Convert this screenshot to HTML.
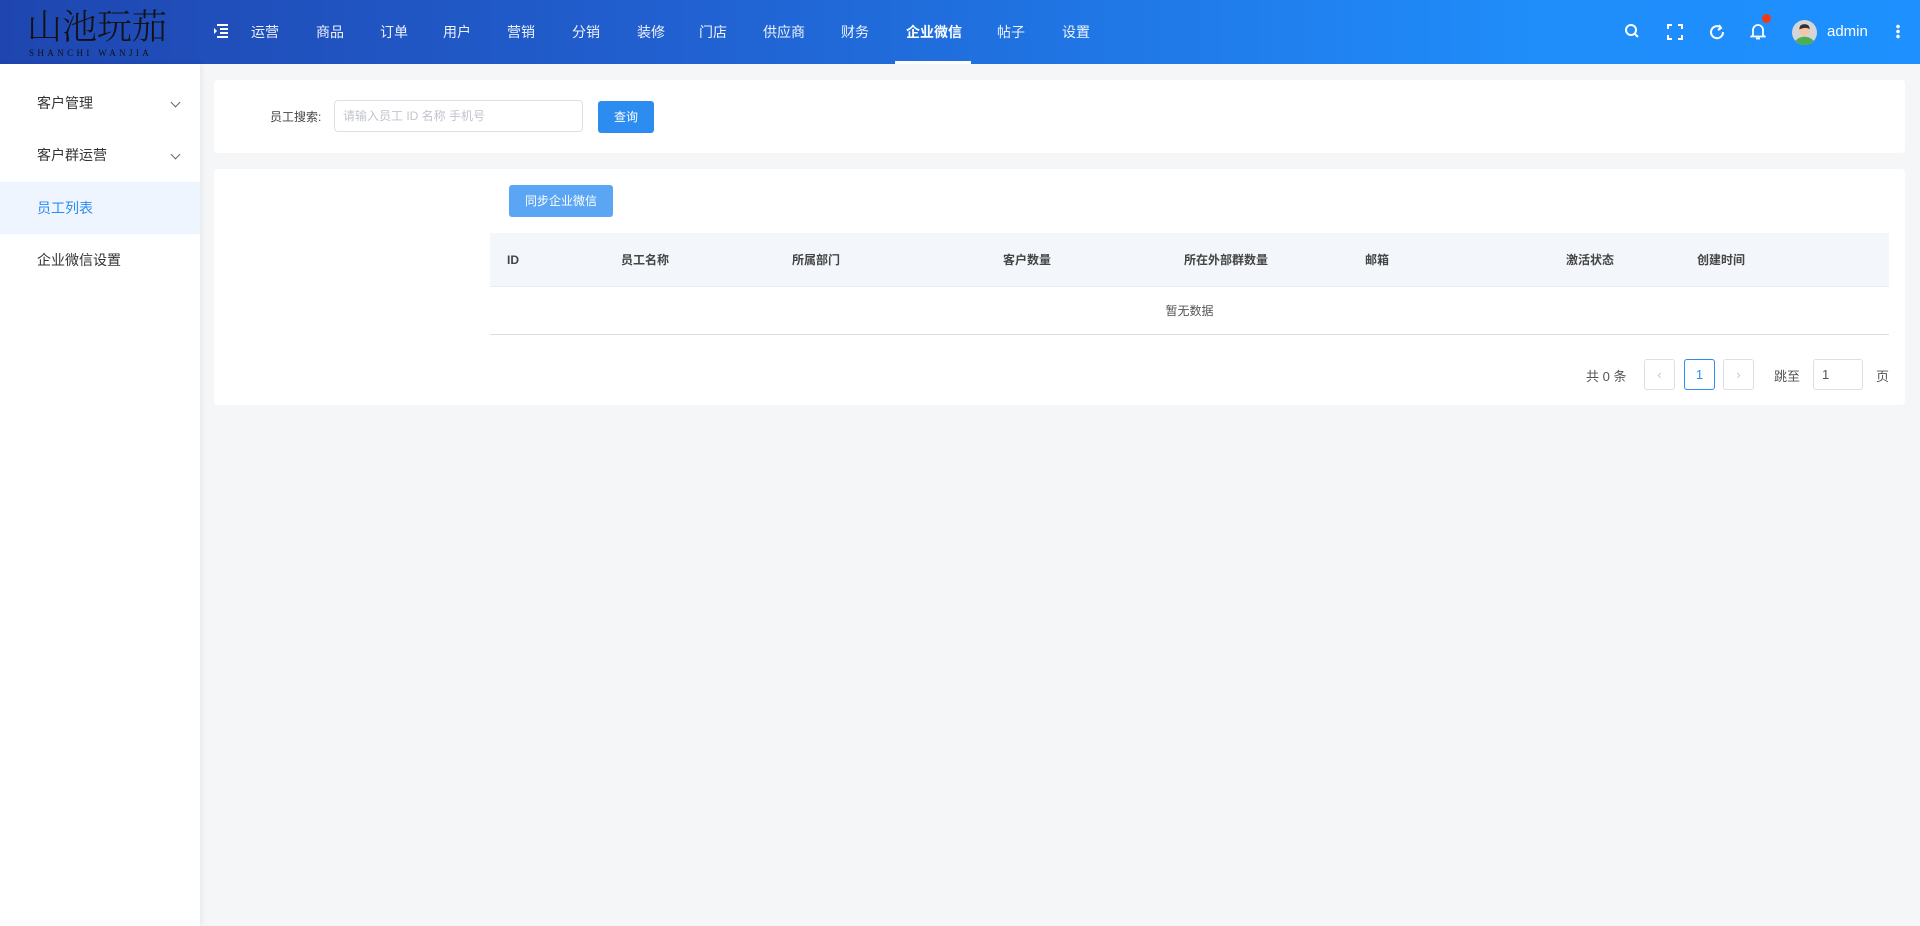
<!DOCTYPE html>
<html><head><meta charset="utf-8"><style>
*{margin:0;padding:0;box-sizing:border-box}
body{width:1920px;height:926px;background:#f5f6f8;font-family:"Liberation Sans","Noto Sans CJK SC",sans-serif;position:relative;overflow:hidden;color:#333}
.hd{position:absolute;left:0;top:0;width:1920px;height:64px;background:linear-gradient(90deg,#1f46b0 0%,#2160d0 35%,#1f8dfa 80%,#1e90ff 100%)}
.abs{position:absolute}
.nav{position:absolute;top:23px;font-size:14px;color:#fff;opacity:.92;line-height:18px}
.nav.on{font-weight:bold;opacity:1}
.side{position:absolute;left:0;top:64px;width:200px;height:862px;background:#fff;box-shadow:2px 0 6px rgba(0,0,0,.06)}
.si{position:absolute;left:0;width:200px;height:52px;line-height:52px;padding-left:37px;font-size:14px;color:#333}
.chev{position:absolute;left:172px;top:22px;width:7px;height:7px;border-right:1px solid #666;border-bottom:1px solid #666;transform:rotate(45deg)}
.card{position:absolute;background:#fff;border-radius:4px}
.th{position:absolute;top:0;line-height:54px;font-size:12px;font-weight:bold;color:#444}
.pb{position:absolute;top:359px;width:31px;height:31px;border:1px solid #dcdfe6;border-radius:3px;font-size:13px;text-align:center;line-height:29px;color:#c0c4cc}
</style></head><body>
<div class="hd">
 <div class="abs" style="left:27px;top:4px;font-family:'Noto Serif CJK SC',serif;font-size:35px;color:#111;letter-spacing:0px;line-height:42px;font-weight:300">山池玩茄</div>
 <div class="abs" style="left:29px;top:48px;font-family:'Liberation Serif',serif;font-size:9px;color:#111;letter-spacing:3.4px">SHANCHI WANJIA</div>
 <svg class="abs" style="left:213px;top:24px" width="16" height="14" viewBox="0 0 16 14"><path d="M4 1H15M7 5H15M7 9H15M4 13H15" stroke="#fff" stroke-width="2"/><path d="M1 4L4 7L1 10Z" fill="#fff"/></svg>
 <div class="nav" style="left:251px">运营</div><div class="nav" style="left:316px">商品</div><div class="nav" style="left:380px">订单</div><div class="nav" style="left:443px">用户</div><div class="nav" style="left:507px">营销</div><div class="nav" style="left:572px">分销</div><div class="nav" style="left:637px">装修</div><div class="nav" style="left:699px">门店</div><div class="nav" style="left:763px">供应商</div><div class="nav" style="left:841px">财务</div><div class="nav on" style="left:906px">企业微信</div><div class="nav" style="left:997px">帖子</div><div class="nav" style="left:1062px">设置</div>
 <div class="abs" style="left:895px;top:61px;width:76px;height:3px;background:#fff"></div>
 <svg class="abs" style="left:1624px;top:23px" width="16" height="16" viewBox="0 0 16 16" fill="none" stroke="#fff" stroke-width="2"><circle cx="7" cy="7" r="5"/><path d="M11 11L14 14"/></svg>
 <svg class="abs" style="left:1667px;top:24px" width="16" height="16" viewBox="0 0 16 16" fill="none" stroke="#fff" stroke-width="2"><path d="M1 5V1H5M11 1H15V5M15 11V15H11M5 15H1V11"/></svg>
 <svg class="abs" style="left:1709px;top:24px" width="16" height="16" viewBox="0 0 16 16" fill="none" stroke="#fff" stroke-width="2"><path d="M14 8A6 6 0 1 1 11 3"/><path d="M10 1L12 4L9 6" /></svg>
 <svg class="abs" style="left:1750px;top:22px" width="16" height="18" viewBox="0 0 16 18" fill="none" stroke="#fff" stroke-width="1.8"><path d="M3 13V8A5 5 0 0 1 13 8V13L14.5 14.5H1.5Z"/><path d="M6 16.5H10"/></svg>
 <div class="abs" style="left:1762px;top:14px;width:9px;height:9px;border-radius:50%;background:#f03a17"></div>
 <svg class="abs" style="left:1792px;top:20px" width="25" height="25" viewBox="0 0 24 24"><circle cx="12" cy="12" r="12" fill="#d5d5d5"/><path d="M3 20Q12 12 21 20Q17 24 12 24Q7 24 3 20Z" fill="#4cae4f"/><circle cx="12" cy="10" r="5" fill="#f5c6a5"/><path d="M7 9Q7 4 12 4Q17 4 17 9Q14 6 7 9Z" fill="#333"/></svg>
 <div class="abs" style="left:1827px;top:23px;font-size:15px;color:#fff">admin</div>
 <div class="abs" style="left:1896px;top:24px;width:4px;height:15px;background:radial-gradient(circle,#fff 1.6px,transparent 2px) 0 0/4px 5px"></div>
</div>
<div class="side">
 <div class="si" style="top:13px">客户管理<i class="chev"></i></div>
 <div class="si" style="top:65px">客户群运营<i class="chev"></i></div>
 <div class="si" style="top:118px;background:#eef5fe;color:#2d8cf0">员工列表</div>
 <div class="si" style="top:170px">企业微信设置</div>
</div>
<div class="card" style="left:214px;top:80px;width:1691px;height:73px">
 <div class="abs" style="left:56px;top:28px;font-size:12px;color:#444">员工搜索:</div>
 <div class="abs" style="left:120px;top:20px;width:249px;height:32px;border:1px solid #dcdfe6;border-radius:4px;font-size:12px;color:#c0c4cc;line-height:30px;padding-left:8px">请输入员工 ID 名称 手机号</div>
 <div class="abs" style="left:384px;top:21px;width:56px;height:32px;background:#2d8cf0;border-radius:3px;color:#fff;font-size:12px;text-align:center;line-height:32px">查询</div>
</div>
<div class="card" style="left:214px;top:169px;width:1691px;height:236px">
 <div class="abs" style="left:295px;top:16px;width:104px;height:32px;background:#5aa6f4;border-radius:3px;color:#fff;font-size:12px;text-align:center;line-height:32px">同步企业微信</div>
 <div class="abs" style="left:276px;top:64px;width:1399px;height:54px;background:#f3f7fc;border-bottom:1px solid #e8eaec">
  <div class="th" style="left:17px">ID</div><div class="th" style="left:131px">员工名称</div><div class="th" style="left:302px">所属部门</div><div class="th" style="left:513px">客户数量</div><div class="th" style="left:694px">所在外部群数量</div><div class="th" style="left:875px">邮箱</div><div class="th" style="left:1076px">激活状态</div><div class="th" style="left:1207px">创建时间</div>
 </div>
 <div class="abs" style="left:276px;top:118px;width:1399px;height:48px;border-bottom:1px solid #dcdee2;text-align:center;line-height:48px;font-size:12px;color:#555">暂无数据</div>
</div>
<div class="abs" style="left:1586px;top:366px;font-size:13px;color:#555">共 0 条</div>
<div class="pb" style="left:1644px">‹</div>
<div class="pb" style="left:1684px;border-color:#2d8cf0;color:#2d8cf0">1</div>
<div class="pb" style="left:1723px">›</div>
<div class="abs" style="left:1774px;top:366px;font-size:13px;color:#555">跳至</div>
<div class="pb" style="left:1813px;width:50px;text-align:left;padding-left:8px;color:#555">1</div>
<div class="abs" style="left:1876px;top:366px;font-size:13px;color:#555">页</div>
</body></html>
